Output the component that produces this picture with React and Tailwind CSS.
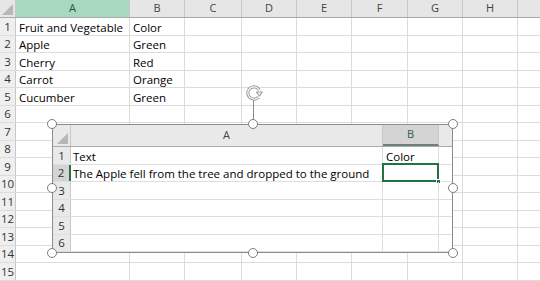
import React from 'react'

const cols = [
  { l: 'A', w: 'w-[114px]' },
  { l: 'B', w: 'w-[55px]' },
  { l: 'C', w: 'w-[57px]' },
  { l: 'D', w: 'w-[55px]' },
  { l: 'E', w: 'w-[55px]' },
  { l: 'F', w: 'w-[56px]' },
  { l: 'G', w: 'w-[55px]' },
  { l: 'H', w: 'w-[55px]' },
  { l: '', w: 'w-[40px]' },
]

const data = [
  ['Fruit and Vegetable', 'Color'],
  ['Apple', 'Green'],
  ['Cherry', 'Red'],
  ['Carrot', 'Orange'],
  ['Cucumber', 'Green'],
]

function Corner({ w }) {
  return (
    <div className={`${w} h-full shrink-0 relative border-r border-[#c8c8c8]`}>
      <div className="absolute right-[2px] bottom-[2px] w-0 h-0 border-l-[11px] border-l-transparent border-b-[11px] border-b-[#b7b7b7]" />
    </div>
  )
}

function Handle({ pos }) {
  return <div className={`absolute ${pos} w-[10px] h-[10px] rounded-full bg-white border border-[#7d7d7d]`} />
}

function RotateIcon() {
  const arc = 'M12.2 11.6 A5.5 5.5 0 1 1 12.8 5.3'
  return (
    <svg width="18" height="18" viewBox="0 0 16 16" className="absolute left-[193px] top-[-40px]">
      <path d={arc} fill="none" stroke="#9b9b9b" strokeWidth="2.8" />
      <path d={arc} fill="none" stroke="#fff" strokeWidth="1" />
      <path d="M10.2 7.2 L15.4 7.2 L12.8 10.6 Z" fill="#fff" stroke="#9b9b9b" strokeWidth="0.9" strokeLinejoin="round" />
    </svg>
  )
}

function EmbeddedSheet() {
  const rows = [['Text', 'Color'], ['The Apple fell from the tree and dropped to the ground', ''], ['', ''], ['', ''], ['', ''], ['', '']]
  return (
    <div className="absolute left-[52px] top-[124px] w-[401px] h-[129px]">
      <div className="w-full h-full border border-[#8c8c8c] bg-white flex flex-col overflow-hidden">
        <div className="h-[22px] shrink-0 flex bg-[#e9e9e9] border-b border-[#ababab]">
          <Corner w="w-[18px]" />
          <div className="w-[312px] shrink-0 border-r border-[#c8c8c8] flex items-center justify-center text-[11px] text-[#444]">A</div>
          <div className="w-[56px] shrink-0 bg-[#d4d4d4] border-r border-[#c8c8c8] border-b-2 border-b-[#6f7f75] flex items-center justify-center text-[11px] text-[#2f5f45]">B</div>
          <div className="flex-1" />
        </div>
        {rows.map((r, i) => (
          <div key={i} className="h-[17.5px] shrink-0 flex border-b border-[#dedede]">
            <div className={`w-[18px] shrink-0 flex items-center justify-center text-[11.5px] text-[#333] ${i === 1 ? 'bg-[#d4d4d4] border-r-2 border-[#217346]' : 'bg-[#e9e9e9] border-r border-[#c8c8c8]'}`}>{i + 1}</div>
            <div className="w-[312px] shrink-0 border-r border-[#dedede] flex items-end pl-[2px] text-[11.5px] leading-[15px] text-black whitespace-nowrap">{r[0]}</div>
            <div className="w-[56px] shrink-0 border-r border-[#dedede] relative flex items-end pl-[3px] text-[11.5px] leading-[15px] text-black">
              {r[1]}
              {i === 1 && (
                <div className="absolute left-[-1px] top-[-2px] right-[-1px] bottom-[-1px] border-2 border-[#217346]">
                  <div className="absolute right-[-4px] bottom-[-4px] w-[5px] h-[5px] bg-[#217346] border border-white" />
                </div>
              )}
            </div>
            <div className="flex-1" />
          </div>
        ))}
      </div>
      <Handle pos="left-[-5px] top-[-5px]" />
      <Handle pos="left-[196px] top-[-5px]" />
      <Handle pos="left-[396px] top-[-5px]" />
      <Handle pos="left-[-5px] top-[59px]" />
      <Handle pos="left-[396px] top-[59px]" />
      <Handle pos="left-[-5px] top-[124px]" />
      <Handle pos="left-[196px] top-[124px]" />
      <Handle pos="left-[396px] top-[124px]" />
      <div className="absolute left-[201px] top-[-24px] w-px h-[20px] bg-[#8c8c8c]" />
      <RotateIcon />
    </div>
  )
}

export default function App() {
  const rowNums = Array.from({ length: 15 }, (_, i) => i + 1)
  return (
    <div className="relative w-[540px] h-[281px] overflow-hidden bg-white font-['Open_Sans',Arial,sans-serif]">
      <div className="h-[18px] flex bg-[#e6e6e6] border-b border-[#a9a9a9]">
        <Corner w="w-[16px]" />
        {cols.map((c, i) => (
          <div
            key={i}
            className={`${c.w} shrink-0 flex items-center justify-center text-[11px] border-r border-[#c8c8c8] ${i === 0 ? 'bg-[#a6d9bd] text-[#245a3d]' : 'text-[#444]'}`}
          >
            {c.l}
          </div>
        ))}
      </div>
      {rowNums.map(n => (
        <div key={n} className="h-[17.5px] flex border-b border-[#dcdcdc]">
          <div className="w-[16px] shrink-0 bg-[#efefef] border-r border-[#c8c8c8] flex items-center justify-center text-[11.5px] text-[#333]">{n}</div>
          {cols.map((c, i) => (
            <div key={i} className={`${c.w} shrink-0 border-r border-[#dcdcdc] flex items-end pl-[3px] text-[11.5px] leading-[15px] text-black whitespace-nowrap`}>
              {i < 2 && data[n - 1] ? data[n - 1][i] : ''}
            </div>
          ))}
        </div>
      ))}
      <EmbeddedSheet />
    </div>
  )
}
